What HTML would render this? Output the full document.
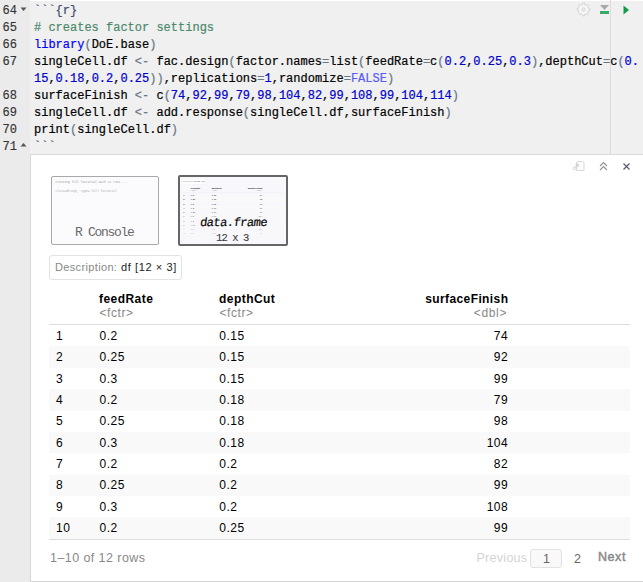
<!DOCTYPE html>
<html><head><meta charset="utf-8">
<style>
html,body{margin:0;padding:0;width:643px;height:582px;overflow:hidden;background:#f0f0f0;position:relative}
*{box-sizing:border-box}
.abs{position:absolute}
.t{position:absolute;white-space:pre;line-height:1}
.ln{position:absolute;left:0;width:17px;text-align:right;font-family:"Liberation Mono",monospace;font-size:12px;line-height:17px;color:#333;white-space:pre;-webkit-text-stroke:0.15px #333}
.code{position:absolute;left:34px;font-family:"Liberation Mono",monospace;font-size:12px;line-height:17px;color:#000;white-space:pre;-webkit-text-stroke:0.2px currentColor}
.k{color:#0000ff}.p{color:#687687}.o{color:#687687}.n{color:#0000cd}.c{color:#4c886b}.f{color:#585cf6}.m{color:#3c4c72}
</style></head><body>

<div class="abs" style="left:0;top:0;width:30px;height:582px;background:#ebebeb"></div>
<div class="abs" style="left:30px;top:0;width:613px;height:1px;background:#fff"></div>
<div class="abs" style="left:610px;top:0px;width:1px;height:154px;background:#dcdcdc"></div>
<div class="ln" style="top:3px">64</div>
<div class="code" style="top:3px"><span class="m">```{r}</span></div>
<div class="ln" style="top:20px">65</div>
<div class="code" style="top:20px"><span class="c"># creates factor settings</span></div>
<div class="ln" style="top:37px">66</div>
<div class="code" style="top:37px"><span class="k">library</span><span class="p">(</span>DoE.base<span class="p">)</span></div>
<div class="ln" style="top:54px">67</div>
<div class="code" style="top:54px">singleCell.df <span class="o">&lt;-</span> fac.design<span class="p">(</span>factor.names<span class="o">=</span>list<span class="p">(</span>feedRate<span class="o">=</span>c<span class="p">(</span><span class="n">0.2</span>,<span class="n">0.25</span>,<span class="n">0.3</span><span class="p">)</span>,depthCut<span class="o">=</span>c<span class="p">(</span><span class="n">0.</span></div>
<div class="code" style="top:71px"><span class="n">15</span>,<span class="n">0.18</span>,<span class="n">0.2</span>,<span class="n">0.25</span><span class="p">))</span>,replications<span class="o">=</span><span class="n">1</span>,randomize<span class="o">=</span><span class="f">FALSE</span><span class="p">)</span></div>
<div class="ln" style="top:88px">68</div>
<div class="code" style="top:88px">surfaceFinish <span class="o">&lt;-</span> c<span class="p">(</span><span class="n">74</span>,<span class="n">92</span>,<span class="n">99</span>,<span class="n">79</span>,<span class="n">98</span>,<span class="n">104</span>,<span class="n">82</span>,<span class="n">99</span>,<span class="n">108</span>,<span class="n">99</span>,<span class="n">104</span>,<span class="n">114</span><span class="p">)</span></div>
<div class="ln" style="top:105px">69</div>
<div class="code" style="top:105px">singleCell.df <span class="o">&lt;-</span> add.response<span class="p">(</span>singleCell.df,surfaceFinish<span class="p">)</span></div>
<div class="ln" style="top:122px">70</div>
<div class="code" style="top:122px">print<span class="p">(</span>singleCell.df<span class="p">)</span></div>
<div class="ln" style="top:139px">71</div>
<div class="code" style="top:139px"><span class="m">```</span></div>
<svg class="abs" style="left:20px;top:7px" width="7" height="5"><path d="M0.5 0.5 L6.5 0.5 L3.5 4 Z" fill="#555"/></svg>
<svg class="abs" style="left:20px;top:142px" width="7" height="5"><path d="M0.5 4.5 L6.5 4.5 L3.5 1 Z" fill="#555"/></svg>
<svg class="abs" style="left:576px;top:2px" width="15" height="15" viewBox="0 0 15 15"><path d="M12.25 6.28 L13.84 6.60 L13.84 8.40 L12.25 8.72 L11.72 9.99 L12.62 11.34 L11.34 12.62 L9.99 11.72 L8.72 12.25 L8.40 13.84 L6.60 13.84 L6.28 12.25 L5.01 11.72 L3.66 12.62 L2.38 11.34 L3.28 9.99 L2.75 8.72 L1.16 8.40 L1.16 6.60 L2.75 6.28 L3.28 5.01 L2.38 3.66 L3.66 2.38 L5.01 3.28 L6.28 2.75 L6.60 1.16 L8.40 1.16 L8.72 2.75 L9.99 3.28 L11.34 2.38 L12.62 3.66 L11.72 5.01 Z" fill="#f7f7f7" stroke="#cfcfcf" stroke-width="0.9"/><circle cx="7.5" cy="7.5" r="1.7" fill="#f0f0f0" stroke="#d0d0d0" stroke-width="0.9"/></svg>
<svg class="abs" style="left:600px;top:5px" width="9" height="9" viewBox="0 0 9 9"><path d="M0 0 L9 0 L4.5 5 Z" fill="#a8a8a8"/><rect x="0" y="6" width="9" height="3" fill="#33ad63"/></svg>
<svg class="abs" style="left:623px;top:5px" width="7" height="10" viewBox="0 0 7 10"><path d="M0.5 0.5 L6 5 L0.5 9.5 Z" fill="#109a4a"/></svg>
<div class="abs" style="left:30px;top:154px;width:613px;height:428px;background:#fff;border-left:1px solid #d6d6d6;border-top:1px solid #d9d9d9;border-bottom:1px solid #d6d6d6"></div>
<svg class="abs" style="left:570px;top:158px" width="18" height="16" viewBox="0 0 18 16"><path d="M6.5 12.5 L6.5 5 Q6.5 3.5 8 3.5 L12.5 3.5 Q14 3.5 14 5 L14 12.5 Z" fill="#fbfbfb" stroke="#dadada" stroke-width="1"/><path d="M5.3 9.6 L7.9 6.5 M5.6 6.3 L8.1 6.3 L8.1 8.8" stroke="#d0d0d0" stroke-width="1.2" fill="none"/><circle cx="4.5" cy="10.4" r="1.4" fill="#fff" stroke="#d4d4d4" stroke-width="1"/></svg>
<svg class="abs" style="left:599px;top:161px" width="9" height="10" viewBox="0 0 9 10"><path d="M1 5 L4.5 1.5 L8 5 M1 9 L4.5 5.5 L8 9" stroke="#939393" stroke-width="1.1" fill="none"/></svg>
<svg class="abs" style="left:622px;top:162px" width="9" height="9" viewBox="0 0 9 9"><path d="M1.5 1.5 L7.5 7.5 M7.5 1.5 L1.5 7.5" stroke="#555b6a" stroke-width="1.2" fill="none"/></svg>
<div class="abs" style="left:51px;top:176px;width:108px;height:69px;border:1px solid #a9a9a9;border-radius:2px;background:#fbfbfd"></div>
<div class="t" style="left:55.5px;top:181px;font-size:3.0px;color:#999;font-family:'Liberation Mono',monospace">creating full factorial with 12 runs ...</div>
<div class="t" style="left:55.5px;top:190px;font-size:3.0px;color:#aaa;font-family:'Liberation Mono',monospace">class=design, type= full factorial</div>
<div class="t" style="left:75px;top:226.19px;font-size:13px;color:#686868;font-family:'Liberation Mono',monospace;letter-spacing:-1.3px">R Console</div>
<div class="abs" style="left:178px;top:175px;width:110px;height:71px;border:2px solid #666;border-radius:2px;background:#f8f8fc"></div>
<div class="abs" style="left:49px;top:255px;width:581px;height:290px"><div class="abs" style="left:0px;top:0px;width:133px;height:25px;border:1px solid #e3e3e3;border-radius:3px;background:#fff"></div>
<div class="t" style="left:6px;top:7.2px;font-size:11px;color:#888;font-family:'Liberation Sans',sans-serif;letter-spacing:0.35px">Description:</div>
<div class="t" style="left:72px;top:7.2px;font-size:11px;color:#222;font-family:'Liberation Sans',sans-serif;letter-spacing:0.6px">df [12 × 3]</div>
<div class="t" style="left:50px;top:38.46px;font-size:12px;color:#000;font-family:'Liberation Sans',sans-serif;font-weight:bold;letter-spacing:0.45px">feedRate</div>
<div class="t" style="left:50.5px;top:51.86px;font-size:12px;color:#888;font-family:'Liberation Sans',sans-serif;letter-spacing:0.55px">&lt;fctr&gt;</div>
<div class="t" style="left:170px;top:38.46px;font-size:12px;color:#000;font-family:'Liberation Sans',sans-serif;font-weight:bold;letter-spacing:0.45px">depthCut</div>
<div class="t" style="left:170.5px;top:51.86px;font-size:12px;color:#888;font-family:'Liberation Sans',sans-serif;letter-spacing:0.55px">&lt;fctr&gt;</div>
<div class="t" style="left:251px;top:38.46px;font-size:12px;color:#000;font-family:'Liberation Sans',sans-serif;font-weight:bold;letter-spacing:0.4px;width:208.4px;text-align:right">surfaceFinish</div>
<div class="t" style="left:251px;top:51.86px;font-size:12px;color:#888;font-family:'Liberation Sans',sans-serif;letter-spacing:0.65px;width:207.1px;text-align:right">&lt;dbl&gt;</div>
<div class="abs" style="left:0px;top:69px;width:581px;height:1px;background:#ddd"></div>
<div class="abs" style="left:0px;top:91.375px;width:581px;height:21.375px;background:#f9f9f9"></div>
<div class="abs" style="left:0px;top:134.125px;width:581px;height:21.375px;background:#f9f9f9"></div>
<div class="abs" style="left:0px;top:176.875px;width:581px;height:21.375px;background:#f9f9f9"></div>
<div class="abs" style="left:0px;top:219.625px;width:581px;height:21.375px;background:#f9f9f9"></div>
<div class="abs" style="left:0px;top:262.375px;width:581px;height:21.375px;background:#f9f9f9"></div>
<div class="t" style="left:7px;top:74.76px;font-size:12px;color:#000;font-family:'Liberation Sans',sans-serif;letter-spacing:0.5px">1</div>
<div class="t" style="left:50.5px;top:74.76px;font-size:12px;color:#000;font-family:'Liberation Sans',sans-serif;letter-spacing:0.5px">0.2</div>
<div class="t" style="left:170.3px;top:74.76px;font-size:12px;color:#000;font-family:'Liberation Sans',sans-serif;letter-spacing:0.5px">0.15</div>
<div class="t" style="left:251px;top:74.76px;font-size:12px;color:#000;font-family:'Liberation Sans',sans-serif;letter-spacing:0.5px;width:208.2px;text-align:right">74</div>
<div class="t" style="left:7px;top:96.13px;font-size:12px;color:#000;font-family:'Liberation Sans',sans-serif;letter-spacing:0.5px">2</div>
<div class="t" style="left:50.5px;top:96.13px;font-size:12px;color:#000;font-family:'Liberation Sans',sans-serif;letter-spacing:0.5px">0.25</div>
<div class="t" style="left:170.3px;top:96.13px;font-size:12px;color:#000;font-family:'Liberation Sans',sans-serif;letter-spacing:0.5px">0.15</div>
<div class="t" style="left:251px;top:96.13px;font-size:12px;color:#000;font-family:'Liberation Sans',sans-serif;letter-spacing:0.5px;width:208.2px;text-align:right">92</div>
<div class="t" style="left:7px;top:117.51px;font-size:12px;color:#000;font-family:'Liberation Sans',sans-serif;letter-spacing:0.5px">3</div>
<div class="t" style="left:50.5px;top:117.51px;font-size:12px;color:#000;font-family:'Liberation Sans',sans-serif;letter-spacing:0.5px">0.3</div>
<div class="t" style="left:170.3px;top:117.51px;font-size:12px;color:#000;font-family:'Liberation Sans',sans-serif;letter-spacing:0.5px">0.15</div>
<div class="t" style="left:251px;top:117.51px;font-size:12px;color:#000;font-family:'Liberation Sans',sans-serif;letter-spacing:0.5px;width:208.2px;text-align:right">99</div>
<div class="t" style="left:7px;top:138.88px;font-size:12px;color:#000;font-family:'Liberation Sans',sans-serif;letter-spacing:0.5px">4</div>
<div class="t" style="left:50.5px;top:138.88px;font-size:12px;color:#000;font-family:'Liberation Sans',sans-serif;letter-spacing:0.5px">0.2</div>
<div class="t" style="left:170.3px;top:138.88px;font-size:12px;color:#000;font-family:'Liberation Sans',sans-serif;letter-spacing:0.5px">0.18</div>
<div class="t" style="left:251px;top:138.88px;font-size:12px;color:#000;font-family:'Liberation Sans',sans-serif;letter-spacing:0.5px;width:208.2px;text-align:right">79</div>
<div class="t" style="left:7px;top:160.26px;font-size:12px;color:#000;font-family:'Liberation Sans',sans-serif;letter-spacing:0.5px">5</div>
<div class="t" style="left:50.5px;top:160.26px;font-size:12px;color:#000;font-family:'Liberation Sans',sans-serif;letter-spacing:0.5px">0.25</div>
<div class="t" style="left:170.3px;top:160.26px;font-size:12px;color:#000;font-family:'Liberation Sans',sans-serif;letter-spacing:0.5px">0.18</div>
<div class="t" style="left:251px;top:160.26px;font-size:12px;color:#000;font-family:'Liberation Sans',sans-serif;letter-spacing:0.5px;width:208.2px;text-align:right">98</div>
<div class="t" style="left:7px;top:181.63px;font-size:12px;color:#000;font-family:'Liberation Sans',sans-serif;letter-spacing:0.5px">6</div>
<div class="t" style="left:50.5px;top:181.63px;font-size:12px;color:#000;font-family:'Liberation Sans',sans-serif;letter-spacing:0.5px">0.3</div>
<div class="t" style="left:170.3px;top:181.63px;font-size:12px;color:#000;font-family:'Liberation Sans',sans-serif;letter-spacing:0.5px">0.18</div>
<div class="t" style="left:251px;top:181.63px;font-size:12px;color:#000;font-family:'Liberation Sans',sans-serif;letter-spacing:0.5px;width:208.2px;text-align:right">104</div>
<div class="t" style="left:7px;top:203.01px;font-size:12px;color:#000;font-family:'Liberation Sans',sans-serif;letter-spacing:0.5px">7</div>
<div class="t" style="left:50.5px;top:203.01px;font-size:12px;color:#000;font-family:'Liberation Sans',sans-serif;letter-spacing:0.5px">0.2</div>
<div class="t" style="left:170.3px;top:203.01px;font-size:12px;color:#000;font-family:'Liberation Sans',sans-serif;letter-spacing:0.5px">0.2</div>
<div class="t" style="left:251px;top:203.01px;font-size:12px;color:#000;font-family:'Liberation Sans',sans-serif;letter-spacing:0.5px;width:208.2px;text-align:right">82</div>
<div class="t" style="left:7px;top:224.38px;font-size:12px;color:#000;font-family:'Liberation Sans',sans-serif;letter-spacing:0.5px">8</div>
<div class="t" style="left:50.5px;top:224.38px;font-size:12px;color:#000;font-family:'Liberation Sans',sans-serif;letter-spacing:0.5px">0.25</div>
<div class="t" style="left:170.3px;top:224.38px;font-size:12px;color:#000;font-family:'Liberation Sans',sans-serif;letter-spacing:0.5px">0.2</div>
<div class="t" style="left:251px;top:224.38px;font-size:12px;color:#000;font-family:'Liberation Sans',sans-serif;letter-spacing:0.5px;width:208.2px;text-align:right">99</div>
<div class="t" style="left:7px;top:245.76px;font-size:12px;color:#000;font-family:'Liberation Sans',sans-serif;letter-spacing:0.5px">9</div>
<div class="t" style="left:50.5px;top:245.76px;font-size:12px;color:#000;font-family:'Liberation Sans',sans-serif;letter-spacing:0.5px">0.3</div>
<div class="t" style="left:170.3px;top:245.76px;font-size:12px;color:#000;font-family:'Liberation Sans',sans-serif;letter-spacing:0.5px">0.2</div>
<div class="t" style="left:251px;top:245.76px;font-size:12px;color:#000;font-family:'Liberation Sans',sans-serif;letter-spacing:0.5px;width:208.2px;text-align:right">108</div>
<div class="t" style="left:7px;top:267.13px;font-size:12px;color:#000;font-family:'Liberation Sans',sans-serif;letter-spacing:0.5px">10</div>
<div class="t" style="left:50.5px;top:267.13px;font-size:12px;color:#000;font-family:'Liberation Sans',sans-serif;letter-spacing:0.5px">0.2</div>
<div class="t" style="left:170.3px;top:267.13px;font-size:12px;color:#000;font-family:'Liberation Sans',sans-serif;letter-spacing:0.5px">0.25</div>
<div class="t" style="left:251px;top:267.13px;font-size:12px;color:#000;font-family:'Liberation Sans',sans-serif;letter-spacing:0.5px;width:208.2px;text-align:right">99</div>
<div class="abs" style="left:0px;top:284px;width:581px;height:1px;background:#ddd"></div></div>
<div class="abs" style="left:180px;top:177px;width:106px;height:67px;overflow:hidden"><div class="abs" style="left:2.3px;top:2.2px;width:581px;height:290px;transform:scale(0.175,0.2);transform-origin:0 0;opacity:1"><div class="abs" style="left:0px;top:0px;width:133px;height:25px;border:1px solid #e3e3e3;border-radius:3px;background:#fff"></div>
<div class="t" style="left:6px;top:7.2px;font-size:11px;color:#888;font-family:'Liberation Sans',sans-serif;letter-spacing:0.35px">Description:</div>
<div class="t" style="left:72px;top:7.2px;font-size:11px;color:#222;font-family:'Liberation Sans',sans-serif;letter-spacing:0.6px">df [12 × 3]</div>
<div class="t" style="left:50px;top:38.46px;font-size:12px;color:#000;font-family:'Liberation Sans',sans-serif;font-weight:bold;letter-spacing:0.45px">feedRate</div>
<div class="t" style="left:50.5px;top:51.86px;font-size:12px;color:#888;font-family:'Liberation Sans',sans-serif;letter-spacing:0.55px">&lt;fctr&gt;</div>
<div class="t" style="left:170px;top:38.46px;font-size:12px;color:#000;font-family:'Liberation Sans',sans-serif;font-weight:bold;letter-spacing:0.45px">depthCut</div>
<div class="t" style="left:170.5px;top:51.86px;font-size:12px;color:#888;font-family:'Liberation Sans',sans-serif;letter-spacing:0.55px">&lt;fctr&gt;</div>
<div class="t" style="left:251px;top:38.46px;font-size:12px;color:#000;font-family:'Liberation Sans',sans-serif;font-weight:bold;letter-spacing:0.4px;width:208.4px;text-align:right">surfaceFinish</div>
<div class="t" style="left:251px;top:51.86px;font-size:12px;color:#888;font-family:'Liberation Sans',sans-serif;letter-spacing:0.65px;width:207.1px;text-align:right">&lt;dbl&gt;</div>
<div class="abs" style="left:0px;top:69px;width:581px;height:1px;background:#ddd"></div>
<div class="abs" style="left:0px;top:91.375px;width:581px;height:21.375px;background:#f9f9f9"></div>
<div class="abs" style="left:0px;top:134.125px;width:581px;height:21.375px;background:#f9f9f9"></div>
<div class="abs" style="left:0px;top:176.875px;width:581px;height:21.375px;background:#f9f9f9"></div>
<div class="abs" style="left:0px;top:219.625px;width:581px;height:21.375px;background:#f9f9f9"></div>
<div class="abs" style="left:0px;top:262.375px;width:581px;height:21.375px;background:#f9f9f9"></div>
<div class="t" style="left:7px;top:74.76px;font-size:12px;color:#000;font-family:'Liberation Sans',sans-serif;letter-spacing:0.5px">1</div>
<div class="t" style="left:50.5px;top:74.76px;font-size:12px;color:#000;font-family:'Liberation Sans',sans-serif;letter-spacing:0.5px">0.2</div>
<div class="t" style="left:170.3px;top:74.76px;font-size:12px;color:#000;font-family:'Liberation Sans',sans-serif;letter-spacing:0.5px">0.15</div>
<div class="t" style="left:251px;top:74.76px;font-size:12px;color:#000;font-family:'Liberation Sans',sans-serif;letter-spacing:0.5px;width:208.2px;text-align:right">74</div>
<div class="t" style="left:7px;top:96.13px;font-size:12px;color:#000;font-family:'Liberation Sans',sans-serif;letter-spacing:0.5px">2</div>
<div class="t" style="left:50.5px;top:96.13px;font-size:12px;color:#000;font-family:'Liberation Sans',sans-serif;letter-spacing:0.5px">0.25</div>
<div class="t" style="left:170.3px;top:96.13px;font-size:12px;color:#000;font-family:'Liberation Sans',sans-serif;letter-spacing:0.5px">0.15</div>
<div class="t" style="left:251px;top:96.13px;font-size:12px;color:#000;font-family:'Liberation Sans',sans-serif;letter-spacing:0.5px;width:208.2px;text-align:right">92</div>
<div class="t" style="left:7px;top:117.51px;font-size:12px;color:#000;font-family:'Liberation Sans',sans-serif;letter-spacing:0.5px">3</div>
<div class="t" style="left:50.5px;top:117.51px;font-size:12px;color:#000;font-family:'Liberation Sans',sans-serif;letter-spacing:0.5px">0.3</div>
<div class="t" style="left:170.3px;top:117.51px;font-size:12px;color:#000;font-family:'Liberation Sans',sans-serif;letter-spacing:0.5px">0.15</div>
<div class="t" style="left:251px;top:117.51px;font-size:12px;color:#000;font-family:'Liberation Sans',sans-serif;letter-spacing:0.5px;width:208.2px;text-align:right">99</div>
<div class="t" style="left:7px;top:138.88px;font-size:12px;color:#000;font-family:'Liberation Sans',sans-serif;letter-spacing:0.5px">4</div>
<div class="t" style="left:50.5px;top:138.88px;font-size:12px;color:#000;font-family:'Liberation Sans',sans-serif;letter-spacing:0.5px">0.2</div>
<div class="t" style="left:170.3px;top:138.88px;font-size:12px;color:#000;font-family:'Liberation Sans',sans-serif;letter-spacing:0.5px">0.18</div>
<div class="t" style="left:251px;top:138.88px;font-size:12px;color:#000;font-family:'Liberation Sans',sans-serif;letter-spacing:0.5px;width:208.2px;text-align:right">79</div>
<div class="t" style="left:7px;top:160.26px;font-size:12px;color:#000;font-family:'Liberation Sans',sans-serif;letter-spacing:0.5px">5</div>
<div class="t" style="left:50.5px;top:160.26px;font-size:12px;color:#000;font-family:'Liberation Sans',sans-serif;letter-spacing:0.5px">0.25</div>
<div class="t" style="left:170.3px;top:160.26px;font-size:12px;color:#000;font-family:'Liberation Sans',sans-serif;letter-spacing:0.5px">0.18</div>
<div class="t" style="left:251px;top:160.26px;font-size:12px;color:#000;font-family:'Liberation Sans',sans-serif;letter-spacing:0.5px;width:208.2px;text-align:right">98</div>
<div class="t" style="left:7px;top:181.63px;font-size:12px;color:#000;font-family:'Liberation Sans',sans-serif;letter-spacing:0.5px">6</div>
<div class="t" style="left:50.5px;top:181.63px;font-size:12px;color:#000;font-family:'Liberation Sans',sans-serif;letter-spacing:0.5px">0.3</div>
<div class="t" style="left:170.3px;top:181.63px;font-size:12px;color:#000;font-family:'Liberation Sans',sans-serif;letter-spacing:0.5px">0.18</div>
<div class="t" style="left:251px;top:181.63px;font-size:12px;color:#000;font-family:'Liberation Sans',sans-serif;letter-spacing:0.5px;width:208.2px;text-align:right">104</div>
<div class="t" style="left:7px;top:203.01px;font-size:12px;color:#000;font-family:'Liberation Sans',sans-serif;letter-spacing:0.5px">7</div>
<div class="t" style="left:50.5px;top:203.01px;font-size:12px;color:#000;font-family:'Liberation Sans',sans-serif;letter-spacing:0.5px">0.2</div>
<div class="t" style="left:170.3px;top:203.01px;font-size:12px;color:#000;font-family:'Liberation Sans',sans-serif;letter-spacing:0.5px">0.2</div>
<div class="t" style="left:251px;top:203.01px;font-size:12px;color:#000;font-family:'Liberation Sans',sans-serif;letter-spacing:0.5px;width:208.2px;text-align:right">82</div>
<div class="t" style="left:7px;top:224.38px;font-size:12px;color:#000;font-family:'Liberation Sans',sans-serif;letter-spacing:0.5px">8</div>
<div class="t" style="left:50.5px;top:224.38px;font-size:12px;color:#000;font-family:'Liberation Sans',sans-serif;letter-spacing:0.5px">0.25</div>
<div class="t" style="left:170.3px;top:224.38px;font-size:12px;color:#000;font-family:'Liberation Sans',sans-serif;letter-spacing:0.5px">0.2</div>
<div class="t" style="left:251px;top:224.38px;font-size:12px;color:#000;font-family:'Liberation Sans',sans-serif;letter-spacing:0.5px;width:208.2px;text-align:right">99</div>
<div class="t" style="left:7px;top:245.76px;font-size:12px;color:#000;font-family:'Liberation Sans',sans-serif;letter-spacing:0.5px">9</div>
<div class="t" style="left:50.5px;top:245.76px;font-size:12px;color:#000;font-family:'Liberation Sans',sans-serif;letter-spacing:0.5px">0.3</div>
<div class="t" style="left:170.3px;top:245.76px;font-size:12px;color:#000;font-family:'Liberation Sans',sans-serif;letter-spacing:0.5px">0.2</div>
<div class="t" style="left:251px;top:245.76px;font-size:12px;color:#000;font-family:'Liberation Sans',sans-serif;letter-spacing:0.5px;width:208.2px;text-align:right">108</div>
<div class="t" style="left:7px;top:267.13px;font-size:12px;color:#000;font-family:'Liberation Sans',sans-serif;letter-spacing:0.5px">10</div>
<div class="t" style="left:50.5px;top:267.13px;font-size:12px;color:#000;font-family:'Liberation Sans',sans-serif;letter-spacing:0.5px">0.2</div>
<div class="t" style="left:170.3px;top:267.13px;font-size:12px;color:#000;font-family:'Liberation Sans',sans-serif;letter-spacing:0.5px">0.25</div>
<div class="t" style="left:251px;top:267.13px;font-size:12px;color:#000;font-family:'Liberation Sans',sans-serif;letter-spacing:0.5px;width:208.2px;text-align:right">99</div>
<div class="abs" style="left:0px;top:284px;width:581px;height:1px;background:#ddd"></div></div><div class="abs" style="left:0;top:26px;width:106px;height:41px;background:linear-gradient(to bottom, rgba(248,248,252,0) 0%, rgba(248,248,252,0.95) 100%)"></div></div>
<div class="t" style="left:200px;top:216.54px;font-size:12px;color:#000;font-family:'Liberation Mono',monospace;letter-spacing:-0.5px;transform:skewX(-7deg);-webkit-text-stroke:0.15px #000">data.frame</div>
<div class="t" style="left:216px;top:233.07px;font-size:10.5px;color:#3a3a3a;font-family:'Liberation Mono',monospace;letter-spacing:-0.9px;-webkit-text-stroke:0.1px #3a3a3a">12 x 3</div>
<div class="t" style="left:50px;top:552.34px;font-size:12.5px;color:#888;font-family:'Liberation Sans',sans-serif;letter-spacing:0.43px">1–10 of 12 rows</div>
<div class="t" style="left:476.5px;top:551.74px;font-size:12.5px;color:#d4d4d4;font-family:'Liberation Sans',sans-serif;letter-spacing:0.28px">Previous</div>
<div class="abs" style="left:530px;top:549px;width:32px;height:19px;border:1px solid #e2e2e2;border-radius:3px;background:#f9f9f9"></div>
<div class="t" style="left:543px;top:553.34px;font-size:12.5px;color:#666;font-family:'Liberation Sans',sans-serif">1</div>
<div class="t" style="left:574px;top:553.34px;font-size:12.5px;color:#666;font-family:'Liberation Sans',sans-serif">2</div>
<div class="t" style="left:598px;top:551.14px;font-size:12.5px;color:#8a8a8a;font-family:'Liberation Sans',sans-serif;letter-spacing:0.55px;-webkit-text-stroke:0.45px #8a8a8a">Next</div>
</body></html>
